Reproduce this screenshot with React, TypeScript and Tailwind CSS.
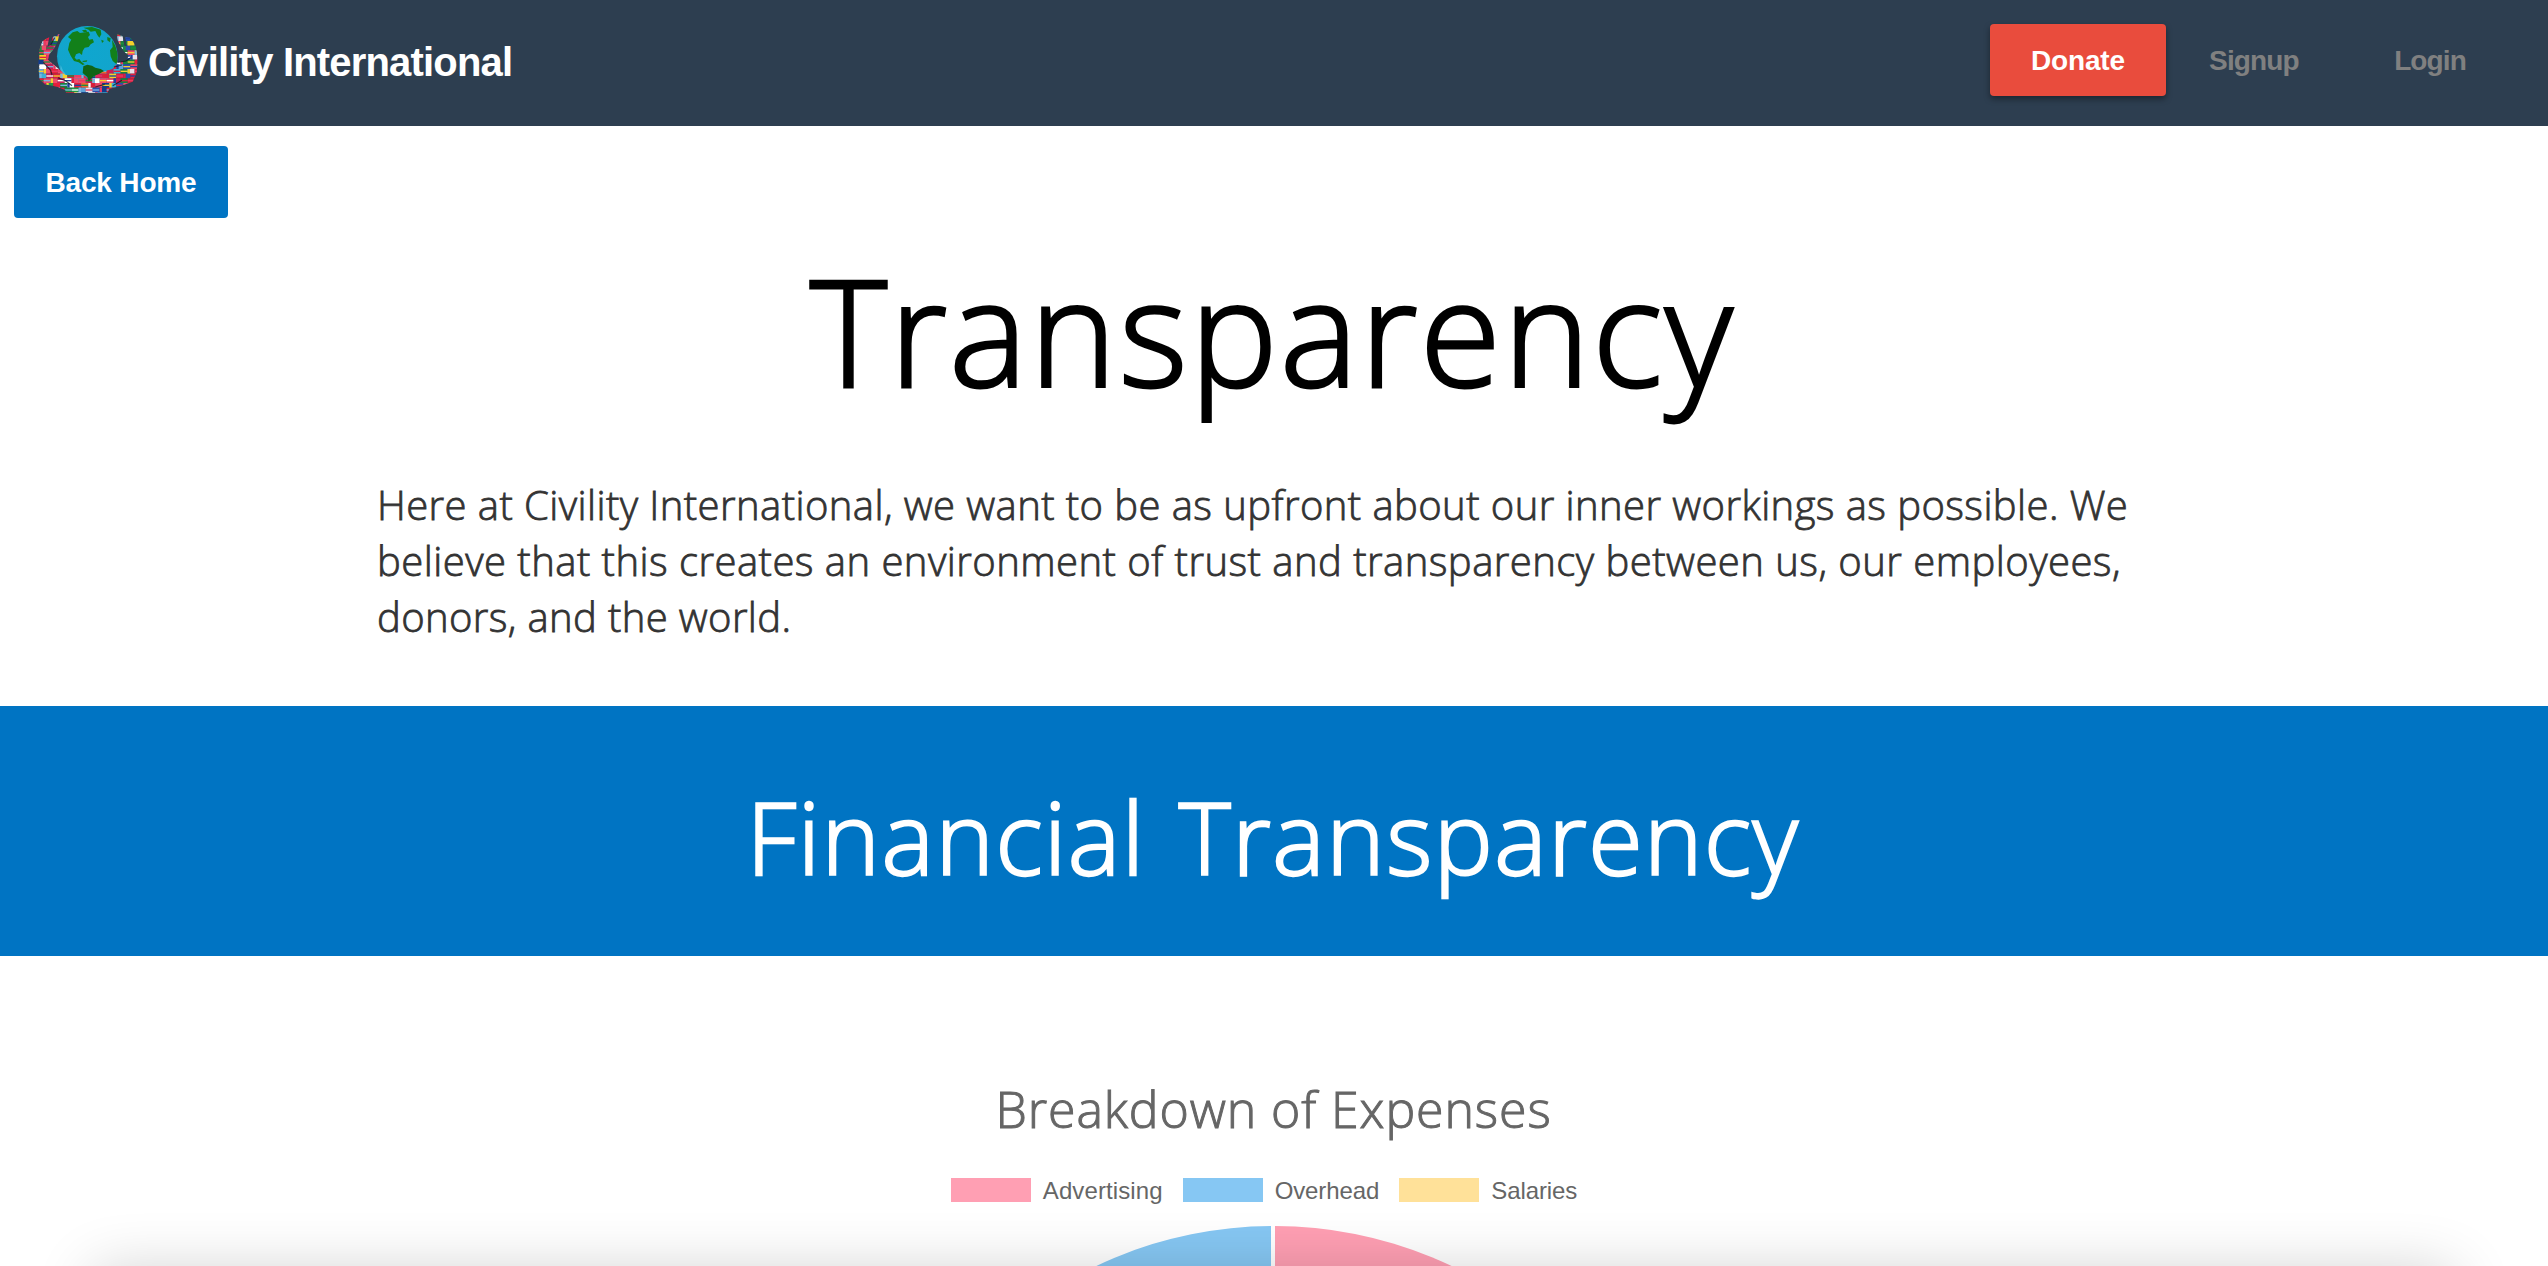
const flagColors = [
  '#d8203a', '#ffffff', '#1e9a46', '#f5d02c', '#2a4db0', '#f04a6a', '#e01e3c', '#e8203c',
  '#5ea2d8', '#f04a6a', '#123c8c', '#f0662a', '#18803c', '#c81e5a', '#e8e2ea', '#3bb0d8',
];

const stripeColors = ['#ffffff', '#e01e3c', '#1c8c40', '#f2cf30', '#1f3f9c', '#e83a62', '#7cb4e0'];

function Flags() {
  const items = [];
  for (let row = 0; row < 14; row++) {
    for (let col = 0; col < 15; col++) {
      const k = (row * 7 + col * 5 + ((row * col) % 11)) % 16;
      const s = (row * 3 + col * 4 + ((row * col) % 5)) % 7;
      const x = 20 + col * 21 + (row % 2) * 8;
      const y = 50 + row * 14;
      items.push(<rect key={`a${row}-${col}`} x={x} y={y} width="21" height="14" fill={flagColors[k]} />);
      items.push(
        (row + col) % 3 ? (
          <rect key={`b${row}-${col}`} x={x} y={y + 5} width="21" height="4" fill={stripeColors[s]} />
        ) : (
          <rect key={`b${row}-${col}`} x={x} y={y} width="7" height="14" fill={stripeColors[s]} />
        ),
      );
    }
  }
  return <>{items}</>;
}

function Logo() {
  return (
    <svg viewBox="0 0 360 270" className="h-[90px] w-[120px]" aria-hidden="true">
      <defs>
        <radialGradient id="sea" cx="0.5" cy="0.45" r="0.58">
          <stop offset="0" stopColor="#0fa6cf" />
          <stop offset="0.8" stopColor="#12a5cc" />
          <stop offset="1" stopColor="#1791b8" />
        </radialGradient>
        <clipPath id="hands">
          <path d="M88 57 L68 66 L62 90 L52 96 L58 66 L38 78 L28 104 L25 150 L28 192 L44 208 L84 216 L106 226 L108 234 L232 234 L238 222 L280 210 L308 200 L320 172 L323 130 L317 92 L302 68 L286 66 L290 94 L283 92 L278 64 L261 56 L264 78 L278 104 L296 124 L288 138 L264 142 L248 162 L220 170 L194 174 L176 192 L160 180 L106 180 L84 160 L62 142 L54 134 L58 118 L74 98 L84 76 Z" />
        </clipPath>
        <clipPath id="globe">
          <circle cx="172" cy="124" r="91" />
        </clipPath>
      </defs>
      <circle cx="172" cy="124" r="91" fill="url(#sea)" />
      <g clipPath="url(#globe)">
        <path d="M92 150 Q104 190 150 206 Q110 208 90 170 Z" fill="#5cc8e4" opacity="0.6" />
        <g fill="#12801a">
          <path d="M128 52 L142 48 L150 54 L166 52 L176 50 L180 60 L174 66 L178 74 L188 72 L192 82 L182 88 L176 96 L164 98 L158 108 L156 120 L148 114 L138 118 L134 128 L140 134 L148 132 L154 140 L164 148 L158 150 L146 142 L132 138 L122 122 L114 104 L118 84 L124 74 L114 66 Z" />
          <path d="M160 38 L186 36 L212 44 L214 58 L208 68 L202 60 L196 48 L182 50 L176 44 Z" />
          <path d="M156 46 L168 44 L172 50 L162 52 Z" />
          <path d="M214 74 L222 78 L216 84 Z" />
          <path d="M246 74 L256 92 L264 120 L260 148 L248 138 L242 124 L240 106 L248 96 Z" />
          <path d="M232 66 L242 70 L240 82 L232 76 Z" />
          <path d="M156 138 L172 136 L170 140 L160 141 Z" />
        </g>
      </g>
      <g clipPath="url(#hands)">
        <Flags />
      </g>
      <path d="M160 154 L172 149 L186 152 L196 158 L212 162 L222 168 L208 176 L190 184 L176 200 L172 186 L158 174 Z" fill="#0f6416" />
      <g fill="none" stroke="#10161c" strokeWidth="3.5" strokeOpacity="0.75">
        <path d="M62 90 L74 68 M40 142 L62 166 L66 180 M264 142 L288 138 L302 128 M252 156 L276 150" />
        <path d="M84 188 L108 198 L126 212 M196 216 L224 208 M248 212 L276 196" />
      </g>
    </svg>
  );
}

function Legend({ swatch, label, tracking = '' }: { swatch: string; label: string; tracking?: string }) {
  return (
    <div className="flex h-6 items-center gap-3">
      <span className={`h-6 w-20 ${swatch}`} />
      <span className={`pt-0.5 font-['Liberation_Sans',Arial,sans-serif] text-2xl leading-6 text-[#666666] ${tracking}`}>
        {label}
      </span>
    </div>
  );
}

export default function App() {
  return (
    <div className="relative h-[1266px] w-full overflow-hidden bg-white font-['Open_Sans',sans-serif] font-light">
      <nav className="flex h-[126px] items-start justify-between bg-[#2d3e50] font-['Liberation_Sans',Arial,sans-serif] font-bold">
        <a className="flex items-start pl-[30px] pt-[15px]">
          <Logo />
          <span className="-ml-0.5 pt-[27px] text-[40px] leading-10 tracking-[-0.82px] text-white">
            Civility International
          </span>
        </a>
        <div className="flex pt-6 text-[28px]">
          <a className="flex h-[72px] w-44 items-center justify-center rounded bg-[#e94c3d] pt-0.5 text-white shadow-[0_3px_6px_rgba(0,0,0,0.4)]">
            <span className="tracking-[-0.165px]">Donate</span>
          </a>
          <a className="flex h-[72px] w-44 items-center justify-center pt-0.5 text-[#808080]">
            <span className="tracking-[-0.853px]">Signup</span>
          </a>
          <a className="mr-[30px] flex h-[72px] w-44 items-center justify-center pt-0.5 text-[#808080]">
            <span className="tracking-[-0.897px]">Login</span>
          </a>
        </div>
      </nav>

      <main>
        <a className="ml-3.5 mt-5 flex h-[72px] w-[214px] items-center justify-center rounded bg-[#0074c3] pt-px font-['Liberation_Sans',Arial,sans-serif] text-[28px] font-bold tracking-[-0.18px] text-white">
          Back Home
        </a>
        <h1 className="mt-[37px] pr-[3px] text-center text-[147px] leading-[150px] tracking-[2.5px] text-black [-webkit-text-stroke:3px_black]">
          Transparency
        </h1>
        <p className="ml-[377px] mt-[72px] whitespace-nowrap text-[40px] leading-[56px] text-[#333333] [-webkit-text-stroke:0.8px_#333333]">
          <span className="block tracking-[0.42px]">
            Here at Civility International, we want to be as upfront about our inner workings as possible. We
          </span>
          <span className="block tracking-[0.465px]">
            believe that this creates an environment of trust and transparency between us, our employees,
          </span>
          <span className="block tracking-[0.37px]">donors, and the world.</span>
        </p>
        <section className="mt-[61px] h-[250px] bg-[#0074c3] pt-[81px]">
          <h2 className="pr-0.5 text-center text-[99px] leading-[100px] tracking-[1.5px] text-white [word-spacing:6px] [-webkit-text-stroke:2.3px_white]">
            Financial Transparency
          </h2>
        </section>
        <section className="flex flex-col items-center pt-32">
          <h3 className="pr-px text-[50px] leading-[50px] tracking-[0.9px] text-[#666666] [-webkit-text-stroke:1px_#666666]">
            Breakdown of Expenses
          </h3>
          <div className="mr-5 mt-11 flex gap-5">
            <Legend swatch="bg-[#ff9fb3]" label="Advertising" tracking="tracking-[0.1px]" />
            <Legend swatch="bg-[#86c7f3]" label="Overhead" tracking="tracking-[-0.1px]" />
            <Legend swatch="bg-[#ffe199]" label="Salaries" tracking="tracking-[-0.1px]" />
          </div>
          <svg viewBox="0 0 840 60" className="mr-0.5 mt-[18px] h-[60px] w-[840px]" aria-hidden="true">
            <path d="M418 6 A410 410 0 0 0 10 416 H418 Z" fill="#86c7f3" />
            <path d="M422 6 A410 410 0 0 1 832 416 H422 Z" fill="#ff9fb3" />
          </svg>
        </section>
      </main>
      <div className="absolute left-[94px] right-[94px] top-[1271px] h-40 shadow-[0_0_60px_rgba(0,0,0,0.19)]" />
    </div>
  );
}
